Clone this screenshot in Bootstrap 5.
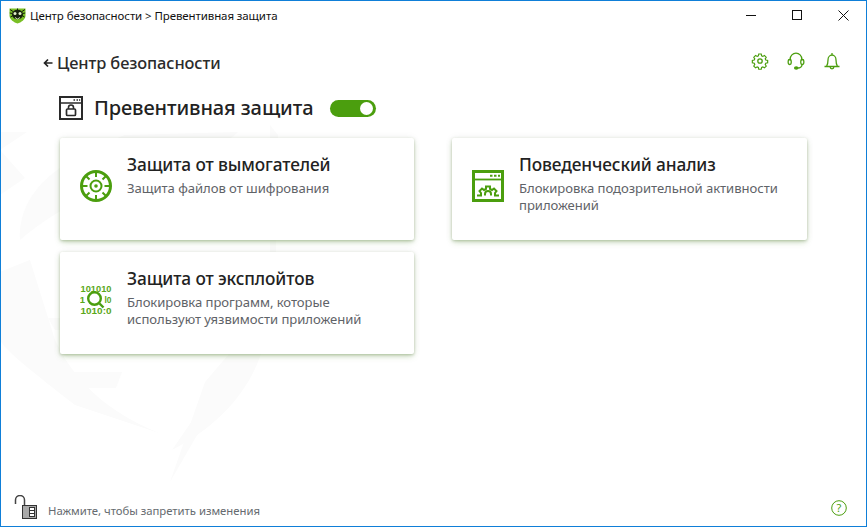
<!DOCTYPE html>
<html lang="ru">
<head>
<meta charset="utf-8">
<title>Превентивная защита</title>
<link href="https://cdn.jsdelivr.net/npm/bootstrap@5.3.0/dist/css/bootstrap.min.css" rel="stylesheet">
<style>
html,body{margin:0;height:100%;overflow:hidden;background:#fff}
body{font-family:"Noto Sans","Open Sans",sans-serif;color:#222}
.app-win{position:relative;width:867px;height:527px;border:1px solid #0f7fd8;overflow:hidden;background:#fff}
.bg-mark{position:absolute;left:-1px;top:-1px;width:867px;height:527px;pointer-events:none}
.layer{position:relative}
.titlebar{height:27px;padding-left:8px}
.app-logo{margin-top:7px;flex:none}
.titlebar-text{font-size:11.5px;letter-spacing:-.1px;color:#111;margin-left:4px;padding-top:9px;line-height:1}
.win-btns{width:138px}
.win-btn{width:46px;height:28px;display:flex;align-items:center;justify-content:center}
.top-row{height:40px;margin-top:15px;padding-left:42px;padding-right:25px}
.back-link{font-size:16.4px;font-weight:500;letter-spacing:-.1px;color:#2b2b2b;margin-left:4px}
.top-icons{gap:18px;margin-bottom:4px}
.page-head{margin-top:7px;padding-left:58px;height:36px}
.page-title{font-size:20px;font-weight:500;letter-spacing:-.1px;margin:0 17px 0 11px;color:#222}
.toggle-pill{width:46px;height:17px;border-radius:9px;background:#4b9e0e;position:relative;display:block}
.toggle-knob{position:absolute;right:3px;top:2px;width:13px;height:13px;border-radius:50%;background:#fff}
.card-grid{display:grid;grid-template-columns:354px 355px;column-gap:38px;row-gap:12px;margin:12px 0 0 59px}
.tile{height:102px;background:#fff;border-radius:2px;box-shadow:0 1px 3px rgba(60,100,30,.28),0 3px 6px -1px rgba(90,150,50,.28),0 0 8px rgba(0,0,0,.06);display:flex;padding:0 12px 0 20px}
.tile-ico{width:32px;height:102px;padding-bottom:6px;display:flex;align-items:center;justify-content:center;flex:none;margin-right:15px}
.tile-ico-low{padding-bottom:9px}
.tile-title{font-size:17.3px;font-weight:500;letter-spacing:-.12px;color:#222;line-height:22px;margin-top:16px}
.tile-desc{font-size:13.1px;color:#5f6368;line-height:17px;letter-spacing:-.05px;margin-top:4px}
.footer-bar{height:32px;margin-top:auto;padding:0 19px 5px 12px}
.foot-text{font-size:11.35px;color:#666b70;margin-left:11px;padding-top:7px;letter-spacing:-.03px}
</style>
</head>
<body>
<div class="app-win d-flex flex-column">
  <svg class="bg-mark" viewBox="0 0 867 527" fill="#fbfbfb" aria-hidden="true">
    <path d="M0 132 L27 132 L0 150Z"/>
    <path d="M0 150 L25 178 L0 195Z"/>
    <path d="M20 240 C 18 190 60 160 125 135 L238 132 L205 160 C130 170 60 205 20 240Z"/>
    <path d="M0 272 L30 260 L55 340 C80 395 130 425 180 440 L75 405 C30 370 5 350 0 340Z"/>
    <path d="M48 318 L125 318 L118 330 L55 330Z"/>
    <path d="M66 372 L122 372 L116 388 L72 388Z"/>
    <path d="M270 125 L278 135 L275 300 L172 450 C230 420 270 370 270 300Z"/>
    <path d="M205 382 L275 300 L170 482 Z"/>
  </svg>

  <div class="layer d-flex align-items-start titlebar">
    <svg class="app-logo" width="17" height="16" viewBox="0 0 17 16" aria-hidden="true">
      <path d="M.5 .5H16.500V7.500C16.500 11.500 12 14.500 8.500 15.500C5 14.500 .5 11.500 .5 7.500Z" fill="#79bf25"/>
      <path d="M1 1.500L4 3.500M16 1.500L13 3.500M.8 5L3.500 5.500M16.200 5L13.500 5.500M1.500 9L4 7.500M15.500 9L13 7.500M8.500 .5V3" stroke="#16210c" stroke-width="1"/>
      <ellipse cx="8.500" cy="6.500" rx="5.500" ry="4.800" fill="#16210c"/>
      <circle cx="6" cy="5.500" r="1.500" fill="#e4f2c8"/><circle cx="11" cy="5.500" r="1.500" fill="#e4f2c8"/>
      <path d="M6 9.500L8.500 11L11 9.500" stroke="#e4f2c8" stroke-width=".9" fill="none"/>
    </svg>
    <span class="titlebar-text flex-grow-1">Центр безопасности &gt; Превентивная защита</span>
    <div class="d-flex win-btns">
      <div class="win-btn"><svg width="11" height="11" aria-hidden="true"><path d="M0 5.500H10" stroke="#111"/></svg></div>
      <div class="win-btn"><svg width="11" height="11" aria-hidden="true"><rect x=".5" y=".5" width="9" height="9" fill="none" stroke="#111"/></svg></div>
      <div class="win-btn"><svg width="11" height="11" aria-hidden="true"><path d="M.5 .5L10.500 10.500M10.500 .5L.5 10.500" stroke="#111" fill="none"/></svg></div>
    </div>
  </div>

  <div class="layer d-flex align-items-center justify-content-between top-row">
    <div class="d-flex align-items-center">
      <svg width="10" height="10" viewBox="0 0 10 10" aria-hidden="true"><path d="M9.500 5H2M5 1.500L1.500 5L5 8.500" fill="none" stroke="#222" stroke-width="1.700"/></svg>
      <span class="back-link">Центр безопасности</span>
    </div>
    <div class="d-flex align-items-center top-icons">
      <svg width="18" height="18" viewBox="0 0 18 18" fill="none" stroke="#4b9e0e" stroke-width="1.300" aria-hidden="true">
        <path d="M7.600 1.200h2.800l.4 2.100 1.300.6 1.800-1.100 2 2-1.100 1.800.6 1.300 2.100.4v2.800l-2.100.4-.6 1.300 1.100 1.800-2 2-1.800-1.100-1.300.6-.4 2.100H7.600l-.4-2.100-1.300-.6-1.800 1.100-2-2 1.100-1.800-.6-1.300-2.100-.4V8.300l2.100-.4.6-1.300-1.100-1.800 2-2 1.800 1.100 1.300-.6z" transform="translate(.9 .9) scale(.9)"/>
        <circle cx="9" cy="9" r="2.200"/>
      </svg>
      <svg width="18" height="18" viewBox="0 0 18 18" fill="none" stroke="#4b9e0e" stroke-width="1.300" aria-hidden="true">
        <path d="M3.200 8.500V7a5.800 5.800 0 0 1 11.600 0v1.500"/>
        <rect x="1.200" y="7.500" width="3" height="5" rx="1.400"/><rect x="13.800" y="7.500" width="3" height="5" rx="1.400"/>
        <path d="M15 12.500c0 2.500-2 3.500-4.500 3.500"/><ellipse cx="9.200" cy="16" rx="1.600" ry="1" fill="#4b9e0e"/>
      </svg>
      <svg width="18" height="18" viewBox="0 0 18 18" fill="none" stroke="#4b9e0e" stroke-width="1.300" aria-hidden="true">
        <path d="M1.500 14.500H16.500M3.500 14.500C5 12 5 10 5 8C5 5 7 3.200 9 3.200S13 5 13 8C13 10 13 12 14.500 14.500"/>
        <path d="M9 1v2.200M7.200 15a1.800 1.800 0 0 0 3.600 0"/>
      </svg>
    </div>
  </div>

  <div class="layer d-flex align-items-center page-head">
    <svg width="24" height="24" viewBox="0 0 24 24" fill="none" stroke="#2a2a2a" aria-hidden="true">
      <rect x="1" y="1" width="22" height="22" stroke-width="2"/>
      <path d="M1 7H23" stroke-width="1.500"/>
      <path d="M14.500 4H16M17.500 4H19M20 4H21.200" stroke-width="1.400"/>
      <rect x="7.500" y="13" width="9" height="6.500" rx="1" stroke-width="1.700"/>
      <path d="M9.500 13v-1.500a2.500 2.500 0 0 1 5 0V13" stroke-width="1.600"/>
    </svg>
    <h1 class="page-title">Превентивная защита</h1>
    <span class="toggle-pill"><span class="toggle-knob"></span></span>
  </div>

  <div class="layer card-grid">
    <div class="tile">
      <div class="tile-ico">
        <svg width="32" height="32" viewBox="0 0 32 32" fill="none" stroke="#4b9e0e" aria-hidden="true">
          <circle cx="16" cy="16" r="14.500" stroke-width="3"/>
          <circle cx="16" cy="16" r="5.500" stroke-width="2"/>
          <circle cx="16" cy="16" r="1.800" fill="#4b9e0e" stroke="none"/>
          <path d="M16 2V7M16 25V30M2 16H7.500M24.500 16H30M6 6L9.500 9.500M26 6L22.500 9.500M6 26L9.500 22.500M26 26L22.500 22.500" stroke-width="2"/>
        </svg>
      </div>
      <div>
        <div class="tile-title">Защита от вымогателей</div>
        <div class="tile-desc">Защита файлов от шифрования</div>
      </div>
    </div>
    <div class="tile">
      <div class="tile-ico">
        <svg width="32" height="32" viewBox="0 0 32 32" fill="none" stroke="#4b9e0e" aria-hidden="true">
          <rect x="1.500" y="1.500" width="29" height="29" stroke-width="3"/>
          <path d="M1.500 9.500H30.500" stroke-width="1.800"/>
          <path d="M18 5.800H20.500M22 5.800H24.500M26 5.800H28" stroke-width="2"/>
          <path d="M5 25.500H9V23L7.500 21L10 18.500L12 20L14 19V16.500H18V19L20 20L22 18.500L24.500 21L23 23V25.500H27M13 25.500V24A3 3 0 0 1 19 24V25.500" stroke-width="2"/>
        </svg>
      </div>
      <div>
        <div class="tile-title">Поведенческий анализ</div>
        <div class="tile-desc">Блокировка подозрительной активности<br>приложений</div>
      </div>
    </div>
    <div class="tile">
      <div class="tile-ico tile-ico-low">
        <svg width="32" height="32" viewBox="0 0 32 32" aria-hidden="true">
          <g fill="#5aa81a" font-family="Liberation Sans,sans-serif" font-size="9.500" font-weight="700" text-anchor="middle">
            <text x="16" y="8.500" textLength="31" lengthAdjust="spacingAndGlyphs">101010</text>
            <text x="2.500" y="19.500">1</text><text x="28" y="19.500" textLength="7" lengthAdjust="spacingAndGlyphs">l0</text>
            <text x="16" y="30.500" textLength="31" lengthAdjust="spacingAndGlyphs">1010:0</text>
          </g>
          <circle cx="14.500" cy="15.500" r="6.300" fill="#fff" stroke="#4b9e0e" stroke-width="2.400"/>
          <path d="M19.500 20.500L23.500 24.500" stroke="#4b9e0e" stroke-width="2.400"/>
        </svg>
      </div>
      <div>
        <div class="tile-title">Защита от эксплойтов</div>
        <div class="tile-desc">Блокировка программ, которые<br>используют уязвимости приложений</div>
      </div>
    </div>
  </div>

  <div class="layer footer-bar d-flex justify-content-between align-items-center">
    <div class="d-flex align-items-center">
      <svg width="24" height="26" viewBox="0 0 24 26" aria-hidden="true">
        <path d="M2.500 9V5A4.500 4.500 0 0 1 11.500 5V11" fill="none" stroke="#444" stroke-width="1.500"/>
        <rect x="9.500" y="10.500" width="14" height="13" fill="#a9a9a9" stroke="#333"/>
        <rect x="16.500" y="12.500" width="5" height="9" fill="#fff" stroke="#333"/>
        <path d="M16.500 15.500H21.500M16.500 18.500H21.500" stroke="#333"/>
      </svg>
      <span class="foot-text">Нажмите, чтобы запретить изменения</span>
    </div>
    <svg width="16" height="16" viewBox="0 0 16 16" aria-hidden="true">
      <circle cx="8" cy="8" r="7.300" fill="none" stroke="#4b9e0e"/>
      <text x="8" y="12" text-anchor="middle" font-size="11" fill="#4b9e0e" font-family="Noto Sans,sans-serif">?</text>
    </svg>
  </div>
</div>
<script src="https://cdn.jsdelivr.net/npm/bootstrap@5.3.0/dist/js/bootstrap.bundle.min.js"></script>
</body>
</html>
